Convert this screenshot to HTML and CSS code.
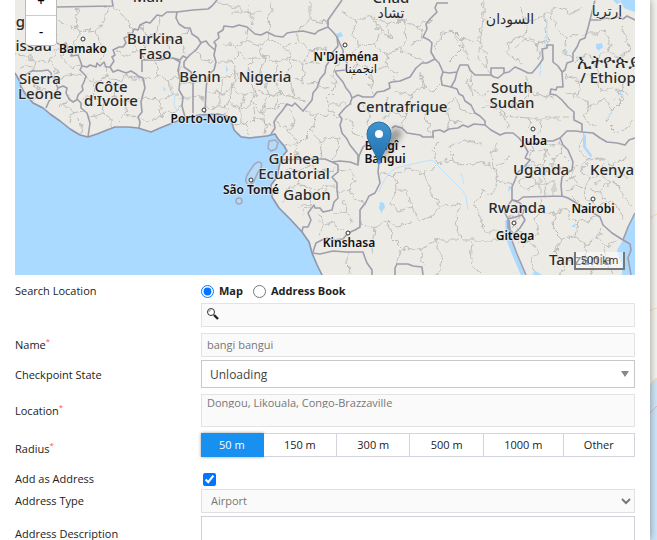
FILE: index.html
```html
<!DOCTYPE html>
<html lang="en">
<head>
<meta charset="utf-8">
<title>Checkpoint</title>
<link rel="stylesheet" href="styles.css">
</head>
<body>
<main class="panel">
  <div class="map">
    <svg class="map-canvas" viewBox="15 0 620 275" preserveAspectRatio="xMinYMin slice" role="img" aria-label="Map of Central Africa">
      <defs>
        <filter id="rough" x="0" y="0" width="1" height="1">
          <feTurbulence type="fractalNoise" baseFrequency="0.14" numOctaves="2" seed="7" result="n"/>
          <feDisplacementMap in="SourceGraphic" in2="n" scale="9" xChannelSelector="R" yChannelSelector="G"/>
        </filter>
        <linearGradient id="pin" x1="0" y1="0" x2="0" y2="1">
          <stop offset="0" stop-color="#3f94cf"/><stop offset="1" stop-color="#226fae"/>
        </linearGradient>
        <filter id="soft" x="-50%" y="-50%" width="200%" height="200%"><feGaussianBlur stdDeviation="3"/></filter>
        <clipPath id="land"><path d="M15 0H635V275H323L318 265 313 253 310 242 303 232 292 220 280 208 273 197 272 185 278 177 280 167 282 158 287 150 285 145 278 138 275 133 267 135 250 137 242 136 235 130 233 123 227 115 217 113 200 114 187 117 175 122 160 128 151 132 138 128 128 127 115 127 107 130 97 134 88 137 80 134 70 128 60 120 50 113 43 107 33 102 27 95 22 87 21 80 15 73z"/></clipPath>
      </defs>
      <rect class="land" x="15" y="0" width="620" height="275"/>
      <g class="region" filter="url(#rough)" clip-path="url(#land)">
        <path d="M15 0H635V275H15z" fill="none" stroke="none"/>
        <path d="M79 8L76 25 80 34 74 42 80 55M107 7L106 18 97 30 99 42 104 50 101 62M74 28L88 31 98 30M112 6L128 20 132 32M57 20L72 28M15 55L28 56 36 62 50 60 58 48M50 60L57 73 52 77M36 62L33 72M66 44L61 58 70 68 82 66M57 80L70 74 82 76M20 66L33 68"/>
        <path d="M30 78L37 88 34 100M37 88L48 92 56 92M60 108L68 98M63 104L72 112 70 124M72 112L84 110M86 76L96 82 108 76 118 82 130 76 142 80M96 82L94 96 82 98M94 96L104 102 114 96 124 102 141 98M104 102L103 114 90 116M103 114L112 118 112 128M114 96L116 84M124 102L126 114 138 118M126 114L118 122M108 76L105 67M76 118L82 124 80 132"/>
        <path d="M117 50L126 56 138 52 146 60M128 33L136 44 138 52M140 25L148 36 158 32 165 40 178 38 187 30M148 36L146 50M165 40L168 52 160 60M178 38L182 50 190 54M158 32L160 18M143 79L158 76 170 80 179 78M158 76L156 62M170 80L172 94 160 100 143 98M160 100L162 114 152 122 140 118M162 114L174 110 183 106M172 94L181 94M184 67L178 72M180 84L193 82M182 98L193 98M193 82L206 82M193 96L205 98M196 50L204 60 215 62"/>
        <path d="M217 0L248 12 252 26M248 5L252 18M272 0L268 20 270 32M310 0V20L296 32M310 20L328 22M230 12L262 12"/>
        <path d="M223 44L236 46 246 40 258 46 270 40 284 46 298 42 310 50 328 48M217 62L232 62 240 54 250 60 264 56 276 62 290 58 304 64 320 62M236 46L240 54M258 46L264 56M284 46L290 58M298 42L296 34M310 50L304 64M246 40L248 28M270 40L268 32M212 74L224 78 236 74 248 80 262 74 274 80 288 76 302 82 318 84M232 62L236 74M250 60L248 80M264 56L262 74M276 62L274 80M290 58L288 76M304 64L302 82M208 92L220 94 232 88 244 96 256 90 268 96 280 92 294 98 306 100M224 78L220 94M236 74L232 88M248 80L256 90M262 74L268 96M274 80L280 92M288 76L294 98M206 106L220 108 230 102 240 110 252 104 262 112 274 108 288 104M220 94L220 108M232 88L230 102M244 96L240 110M256 90L252 104M268 96L262 112M280 92L274 108M240 110L240 122 234 124M252 104L254 118 246 126 248 136M254 118L266 122 264 134M262 112L266 122 273 124M230 102L224 114M240 122L246 126"/>
        <path d="M342 12L356 20 372 16 388 24 402 20 418 26 432 20M356 20L352 34 360 44 352 54 358 64 348 72M372 16L380 32 374 46 388 54 400 48 412 56 422 63M374 46L360 44M388 24L392 38 380 32M402 20L406 36 400 48M418 26L423 37 412 44M358 64L372 70 386 66 396 74 392 82M372 70L370 84 376 96M386 66L388 54M358 64L352 80"/>
        <path d="M340 60L332 74 336 88 326 98 330 112 340 118M318 88L330 90M302 110L316 116 328 114M316 116L312 130 320 142 332 138 340 140M287 108L296 120 290 132 298 144 312 130M298 144L296 156M320 142L322 158M275 122L286 126 290 132M283 148L298 144M340 140L338 152 332 160M330 104L352 104"/>
        <path d="M360 104L370 112 366 124 376 132 372 142M386 96L390 110 384 120M390 110L404 116 412 108 426 112 434 104 446 106 456 98M404 116L402 128M426 112L428 128 434 136M446 106L450 120 446 130M412 108L410 94 424 88 434 92 442 84M424 88L420 72M394 92L410 94M456 98L464 112 474 114M450 120L462 122M345 118L354 122 352 132 362 138"/>
        <path d="M482 0L484 20 478 40 486 54 488 70M440 34L452 30 460 38 474 40M440 34L436 50M452 30L462 48 470 60M462 48L450 60M508 42L524 36 536 44 548 40M508 42L510 56 522 64M524 36L528 22 544 16 546 30 548 44M544 16L556 8 570 14 584 8M556 30L566 38 578 34M556 30L552 12M566 38L564 52 574 58M528 22L520 8M536 44L540 58"/>
        <path d="M470 70L472 88 482 96 492 90M482 108L492 106 504 116 530 118 562 118M526 76L530 92 520 104 504 106M530 92L544 96 556 100M530 118L528 132M541 118L540 132 530 140M492 106L484 100M504 116L508 128M466 78L474 96M514 96L516 112"/>
        <path d="M574 62L582 54 594 60 608 52 620 58 630 50M594 60L598 74M565 76L580 80 590 74 602 92 616 88 628 96M580 80L578 96 590 104 584 118 596 128M590 104L604 100 612 110 606 122 618 134M612 110L622 100 616 88M566 94L578 96M622 26L626 40 630 50M604 32L610 44 608 52M584 34L596 34 604 32M618 134L632 124 635 120M624 80L618 96"/>
        <path d="M286 168L300 170 308 164 320 172 334 170M300 170L298 184 286 190M298 184L312 190 326 186 336 186M312 190L310 204 298 208M310 204L304 214M286 190L282 204M326 186L330 200M350 168L356 180 348 190 356 200 366 202M340 172L350 168M348 190L338 192M334 214L346 212 352 222M346 212L344 200M318 212L324 226 334 222 342 232M324 226L318 238"/>
        <path d="M380 172L394 176 408 168 424 174 438 164 452 160 462 166 480 162 494 168 498 180 512 184M438 164L432 150 440 142M394 176L398 190 390 202 398 212 412 208 418 220 432 216 440 206 460 204M412 208L406 190 398 190M460 204L456 220 460 240 482 240 508 240M498 180L492 196 484 190 474 204 480 216 484 232 508 232M452 160L450 146 464 140 480 144M424 174L430 188 440 206M360 222L374 228 388 220 398 226 412 222M388 220L392 238 402 248 396 264M374 228L372 252M346 253L350 275M402 248L420 250 436 240 456 240M472 242L470 260 480 274M436 240L442 256 438 275M420 250L424 264M508 158L498 166M498 144L490 156 494 168"/>
        <path d="M530 142L534 152 528 160 538 166 530 174 536 184 526 190M534 152L546 150 552 158 562 154 568 160M546 150L544 164 538 166M552 158L554 170 544 174 544 164M554 170L564 168M544 174L546 196M536 184L546 184 554 180 554 196M526 190L518 184M562 154L558 142M556 146L546 144M520 168L530 174M518 184L524 176M526 150L534 152M548 164L556 164M540 176L540 194"/>
        <path d="M584 136L580 150 588 160 580 170 590 178 584 190 576 186 564 190M588 160L602 158 612 164 626 158M590 178L602 174 608 182 600 192 606 202 598 208M608 182L620 186 624 198 632 204M584 190L586 200 594 204M600 192L590 190M602 174L604 164M576 166L570 178 578 182M606 202L618 206 624 220M612 164L616 176 628 178M572 196L580 204M594 184L602 182M566 180L576 178"/>
        <path d="M540 200L542 212 534 220 540 232 530 240 538 250 530 262 534 275M542 212L556 214 566 208 570 218 582 222 594 218M556 214L552 228 562 238 556 250 566 260 562 275M562 238L576 236 586 244 598 238 608 246 616 240M576 236L578 222M586 244L584 258 594 266 590 275M566 260L584 258M598 238L602 228M530 240L520 246M604 246L606 262 612 275M512 204L518 214 526 208M518 214L514 226 522 232M508 218L518 214"/>
      </g>
      <g class="dash">
        <path d="M484 2L482 30 478 58 490 73M515 48L526 38 538 41 549 46M468 55L462 42 450 30 440 36M545 117H573"/>
      </g>
      <g class="water">
        <path d="M15 73L21 80 22 87 27 95 33 102 43 107 50 113 60 120 70 128 80 134 88 137 97 134 107 130 115 127 128 127 138 128 151 132 160 128 175 122 187 117 200 114 217 113 227 115 233 123 235 130 242 136 250 137 267 135 275 133 278 138 285 145 287 150 282 158 280 167 278 177 272 185 273 197 280 208 292 220 303 232 310 242 313 253 318 265 323 275H15z"/>
        <path d="M635 213L628 227 623 240 617 250 619 258 622 264 622 275H635z"/>
        <path d="M613 0L617 4 621 2 624 8 629 10 635 12V0z"/>
        <path d="M596 44L602 43 603 48 600 49 599 51 596 48zM565 49L568 52 566 54zM336 34L341 32 343 36 338 38zM331 81L335 84 332 84zM380 202L384 203 385 208 382 211 382 214 379 208zM583 132L586 136 586 147 592 155 591 158 583 147zM509 186L512 187 508 192zM620 92L623 95 620 95zM163 86L166 90 164 91zM226 65L228 70 226 72zM571 227L576 223 575 227zM533 164L527 168 524 166zM534 270L542 275H534zM603 117L601 119zM56 33L58 35 56 36z"/>
        <path class="lake" d="M507 220L508 238 514 254 523 275"/>
        <path class="stream" d="M379 192Q384 176 396 168Q420 162 432 160L440 168 450 178 462 190 466 196M461 173L464 184M466 196L468 210M547 18V34L545 46L541 60L540 76M171 89L175 95 174 104 177 111M612 112L606 120M616 98L613 101M578 56L576 62"/>
      </g>
      <g class="border">
        <path d="M28 0L29 3 57 7 113 6 112 0M57 43L61 45 66 43 68 50 72 53 71 56 78 55 80 60 82 66 87 67 90 65 96 67 97 63 100 66 104 62 106 67 110 67 113 72 118 70 126 73 131 71 136 74 138 76 143 78 145 88 143 94 141 102 142 112 138 117 140 122 139 128"/>
        <path d="M82 66L80 70 86 76 84 82 82 86 83 90 78 95 77 99 81 103 81 108 87 113 90 123 88 137M25 75L32 71 41 71 48 70 51 73 52 77 57 80 56 84 58 88 63 86 67 88 66 93 69 99 73 102 78 99M46 108L49 101 55 96 58 88"/>
        <path d="M110 67L114 61 112 57 115 55 113 50 119 47 123 47 126 43 124 38 129 36 128 33 132 34 134 29 138 30 140 25 146 22 150 23 157 15 162 16 167 12 177 12 176 18 179 24 185 28 190 28 192 34 198 38 201 43 196 50 191 54 187 58 183 56 180 60 173 58 158 60 142 60V72M177 12L193 10 208 9 212 6 217 0"/>
        <path d="M173 58L180 62 178 70 180 80 179 90 183 97 182 106 185 117M187 58L184 62 184 67 191 72 193 80V113M200 43L206 41 209 45 215 50 214 55 216 62 214 70 209 74 207 80 206 90 205 113"/>
        <path d="M215 50L216 45 214 42 219 38 218 33 223 30 224 26 233 27 239 25 247 27 255 34 261 35 267 32 275 36 283 37 287 33 293 32 303 31 315 34 318 31 328 27 328 20 335 10 342 0M328 27L333 32 337 37 340 44 343 50 343 56 347 63 346 70 335 71 337 75 343 82 346 88 350 93 352 98"/>
        <path d="M337 37L338 46 332 53 330 60 326 66 325 73 320 79 317 88 313 93 312 100 308 105 303 111 299 107 295 103 292 106 287 104 282 111 277 117 274 122 275 128 271 134"/>
        <path d="M352 98L358 95 363 97 373 97 377 92 384 91 390 88 389 83 392 82 400 81 410 77 416 68 422 63 427 63 435 59 439 63 443 72 441 78 442 85 451 87 455 80 457 72M443 72L449 73 457 72 460 65 468 65 470 70 475 75 485 75 491 75 491 68 504 68 504 73 498 78 494 77 491 75M504 73L509 72 515 67 520 69 528 73 532 73 538 66 543 59 542 49 547 48 547 45 553 45 553 62 558 66 562 72 563 87 557 87 556 90 551 89 550 94 556 95 562 100 568 107 574 112 574 120 578 122 582 124 582 132"/>
        <path d="M448 3L437 3 435 8 437 12 430 19 426 24 427 29 423 37 429 40 432 43 431 52 435 59M451 87L457 89 459 94 463 96 465 101 471 105 475 113 480 116 485 121 485 125M392 128L395 126 402 128 407 133 420 135 423 137 433 137 433 131 440 130 444 132 449 129 458 128 463 125 468 127 474 124 485 125 491 130 500 135 505 133 513 133 519 138 523 143 528 152 525 158"/>
        <path d="M352 98L350 104 345 108 339 115 342 119 340 125 342 133 347 139 350 145 358 155 358 165M282 160L303 159 325 159 332 162 340 161 350 162 358 165 359 156 363 147 368 143 374 143M332 162L338 165 338 172 332 177 337 183 337 190 338 198 334 202 332 210 323 212 320 208 315 208 314 205 308 213 311 220 308 227 303 227 302 232"/>
        <path d="M379 163L378 172 380 183 375 193 369 196 366 202 360 210V227L355 230 348 233 343 239 333 240 327 238 322 240 316 243 313 252M312 253L320 254 333 251 346 252 363 252 365 258 367 263 372 270 372 275M395 275V268L397 264 408 264 413 266 422 267 423 275"/>
        <path d="M527 142L533 144 543 141 553 141 560 138 567 131 576 131 582 132 593 133 600 138 607 142 617 143 625 145 629 140 635 138M560 138L563 145 568 150 571 157 573 162 572 170 567 173 562 177 561 185 562 196 568 198 583 207 600 217 603 225 612 233 623 240 628 227 635 213M623 240L630 244 631 250 628 258 631 275M525 158L530 160 525 166 518 172 515 180 512 187 512 200M512 200L518 201 523 197 562 196"/>
        <path d="M512 200L507 207 505 213 508 219 516 217 522 215 525 208 520 203zM508 219L508 228 514 234 520 228 525 220 522 215M595 0L593 8 590 20 588 28 585 38 580 40 577 47 573 53 573 61 567 63 565 70 562 72M590 20L600 20 606 18 611 19 617 17 623 19 627 16 635 20"/>
        <path d="M509 220L511 238 517 254 526 275"/>
      </g>
      <g class="coast">
        <path d="M15 73L19 80 21 87 26 95 33 103 43 108 50 114 60 121 70 129 80 135 88 137 97 134 107 130 115 127 128 127 138 128 151 132 160 128 175 122 187 117 200 115 217 114 227 116 232 123 234 130 241 137 250 138 267 136 275 134 278 139 284 146 287 151 281 158 279 167 277 177 271 185 272 197 279 208 291 220 302 232 309 242 312 253 317 265 322 275"/>
        <path class="isle" d="M269 141L275 140 278 143 276 149 271 151 268 148zM253 166Q258 160 261 163Q263 166 258 172L254 181Q249 188 246 182Q245 178 249 172z"/>
        <circle class="isle" cx="239" cy="201" r="3"/>
      </g>
      <g class="town">
        <circle cx="83" cy="39" r="2"/><circle cx="204" cy="110" r="2"/><circle cx="345" cy="45" r="2"/><circle cx="251" cy="180" r="2"/><circle cx="348" cy="233" r="2"/><circle cx="533" cy="129" r="2"/><circle cx="593" cy="199" r="2"/><circle cx="514" cy="223" r="2"/>
      </g>
      <g class="country">
        <text x="148" y="2">Mali</text><text x="391" y="3">Chad</text><text x="391" y="18" class="arabic">تشاد</text>
        <text x="25" y="27" class="end">ég</text><text x="52" y="51" class="end">issau</text>
        <text x="155" y="44">Burkina</text><text x="155" y="59">Faso</text>
        <text x="40" y="84">Sierra</text><text x="40" y="99">Leone</text>
        <text x="111" y="92">Côte</text><text x="111" y="106">d'Ivoire</text>
        <text x="200" y="82">Bénin</text><text x="265" y="82">Nigeria</text>
        <text x="294" y="164">Guinea</text><text x="294" y="179">Ecuatorial</text><text x="307" y="200">Gabon</text>
        <text x="402" y="112">Centrafrique</text><text x="512" y="93">South</text><text x="512" y="108">Sudan</text>
        <text x="510" y="24" class="arabic">السودان</text><text x="607" y="16" class="arabic">إرتريا</text><text x="607" y="0">ኤርትራ</text>
        <text x="577" y="68" class="start ethiopic">ኢትዮጵያ</text><text x="580" y="83" class="start">/ Ethiopia</text>
        <text x="541" y="175">Uganda</text><text x="612" y="175">Kenya</text><text x="517" y="213">Rwanda</text><text x="549" y="265" class="start">Tanzania</text>
      </g>
      <g class="city">
        <text x="83" y="53">Bamako</text><text x="204" y="123">Porto-Novo</text><text x="346" y="61">N'Djaména</text><text x="361" y="73" class="arabic">انجمينا</text>
        <text x="385" y="150">Bangî -</text><text x="385" y="163">Bangui</text><text x="534" y="145">Juba</text><text x="593" y="213">Nairobi</text>
        <text x="515" y="240">Gitega</text><text x="349" y="247">Kinshasa</text><text x="251" y="194">São Tomé</text>
      </g>
      <path d="M381 161L402 135Q402 126 393 129L380 143z" fill="#000" opacity=".35" filter="url(#soft)"/>
      <path d="M379 162L369 142Q367 138 367 134A12 12 0 0 1 391 134Q391 138 389 142z" fill="url(#pin)" stroke="#2b6f9f" stroke-width="1"/>
      <circle cx="379" cy="134" r="4" fill="#fff"/><circle cx="379" cy="162" r="2" fill="#3388ff"/>
    </svg>
    <div class="zoom"><button type="button" aria-label="Zoom in">+</button><button type="button" aria-label="Zoom out">-</button></div>
    <div class="scale">500 km</div>
  </div>

  <form class="form">
    <span class="label first">Search Location</span>
    <div class="choices">
      <input type="radio" id="by-map" name="by" checked><label for="by-map">Map</label>
      <input type="radio" id="by-book" name="by"><label for="by-book">Address Book</label>
    </div>
    <div class="field search">
      <svg width="12" height="12" viewBox="0 0 12 12" aria-hidden="true"><circle cx="4" cy="4" r="3.5" fill="#fff" stroke="#333"/><path d="M2 4Q2 2 4 2" fill="none" stroke="#999"/><path d="M7 7L11 11" stroke="#222" stroke-width="2.4"/></svg>
      <input type="text" aria-label="Search location">
    </div>
    <label class="label" for="name">Name<sup>*</sup></label>
    <input class="field name" id="name" type="text" value="bangi bangui">
    <label class="label" for="state">Checkpoint State</label>
    <div class="pick state"><select id="state"><option>Unloading</option></select><svg width="8" height="6" viewBox="0 0 8 6" aria-hidden="true"><path d="M0 0H8L4 6z" fill="#888"/></svg></div>
    <label class="label" for="location">Location<sup>*</sup></label>
    <div class="field location"><textarea id="location" rows="1">Dongou, Likouala, Congo-Brazzaville</textarea></div>
    <span class="label low" id="radius">Radius<sup>*</sup></span>
    <div class="radius" role="group" aria-labelledby="radius">
      <button type="button" class="on">50 m</button><button type="button">150 m</button><button type="button">300 m</button><button type="button">500 m</button><button type="button">1000 m</button><button type="button">Other</button>
    </div>
    <label class="label" for="add">Add as Address</label>
    <input class="tick" id="add" type="checkbox" checked>
    <label class="label" for="type">Address Type</label>
    <div class="pick type"><select id="type"><option>Airport</option></select><svg width="10" height="7" viewBox="0 0 10 7" aria-hidden="true"><path d="M1 1L5 5 9 1" fill="none" stroke="#777" stroke-width="2"/></svg></div>
    <label class="label" for="desc">Address Description</label>
    <textarea class="desc" id="desc"></textarea>
  </form>
</main>
<aside class="backdrop" aria-hidden="true">
  <svg viewBox="0 0 7 540" preserveAspectRatio="xMinYMin slice">
    <rect width="7" height="540" fill="#f4f3f0"/>
    <path d="M0 387L3 380 7 378V540H0z" fill="#cfe6f8"/>
    <path d="M0 218L7 214M0 311L3 309 7 308M0 386L3 381 7 378" fill="none" stroke="#f6deb0" stroke-width="1"/>
    <path d="M0 413L7 406" stroke="#cbbfd0"/>
  </svg>
</aside>
</body>
</html>
```
FILE: styles.css
```css
* { box-sizing: border-box; }

body {
  margin: 0;
  height: 100vh;
  overflow: hidden;
  display: flex;
  background: #f4f3f0;
  font: 11px/16px "Open Sans", "Noto Sans", sans-serif;
  color: #222;
}

input, select, textarea, button { font: inherit; color: inherit; margin: 0; }

.panel {
  position: relative;
  flex: 1;
  min-width: 0;
  padding: 0 15px;
  background: #fff;
  box-shadow: 0 0 8px rgba(0, 0, 0, .4);
  z-index: 1;
}
.backdrop { flex: 0 0 7px; overflow: hidden; }
.backdrop svg { display: block; width: 7px; height: 540px; }

/* Map */
.map { position: relative; overflow: hidden; background: #ecebe6; }
.map-canvas { display: block; width: 100%; height: 275px; }
.land { fill: #ecebe6; }
.water { fill: #aadaff; }
.water .lake { fill: none; stroke: #aadaff; stroke-width: 4; }
.water .stream { fill: none; stroke: #bfe2fb; stroke-width: 1; }
.region { fill: none; stroke: #bdbcba; stroke-width: 1; }
.dash { fill: none; stroke: #c4c3c1; stroke-dasharray: 6 3; }
.border { fill: none; stroke: #9f9eac; stroke-width: 1.6; stroke-linejoin: round; }
.coast { fill: none; stroke: #9695a8; stroke-width: 1.6; stroke-linejoin: round; }
.coast .isle { fill: #b4dcf9; stroke: #a6a9bd; }
.town { fill: #fff; stroke: #333; stroke-width: 1; }
.country, .city {
  font-family: "Noto Sans", "Open Sans", "DejaVu Sans", sans-serif;
  text-anchor: middle;
  paint-order: stroke;
  stroke: rgba(240, 239, 235, .6);
  stroke-width: 2px;
}
.country { font-size: 15px; font-weight: 500; fill: #2b2b2b; }
.city { font-size: 12px; font-weight: 600; fill: #111; }
.country .end { text-anchor: end; }
.country .start { text-anchor: start; }
.country .arabic { font-size: 14px; }
.country .ethiopic { font-size: 18px; }
.city .arabic { font-weight: 400; }

.zoom {
  position: absolute;
  top: -16px;
  left: 10px;
  width: 32px;
  border: 1px solid #bbb;
  border-radius: 4px;
  overflow: hidden;
}
.zoom button {
  display: block;
  width: 100%;
  height: 30px;
  padding: 0;
  border: 0;
  background: #fff;
  color: #000;
  font-size: 13px;
  font-weight: 600;
}
.zoom button + button { border-top: 1px solid #ccc; }
.scale {
  position: absolute;
  right: 10px;
  bottom: 5px;
  width: 51px;
  height: 18px;
  border: 2px solid #777;
  border-top: 0;
  background: rgba(255, 255, 255, .5);
  text-align: center;
  color: #333;
}

/* Form */
.form { display: grid; grid-template-columns: 186px 1fr; align-items: center; }
.label sup { color: #f55; font-size: 8px; line-height: 0; vertical-align: 5px; }
.first { padding-top: 4px; }
.low { padding-top: 8px; }

.choices { display: flex; align-items: center; height: 28px; padding-top: 4px; font-weight: 700; }
.choices input { width: 13px; height: 13px; }
.choices label { margin: 0 10px 0 5px; }

.field {
  width: 100%;
  height: 24px;
  padding: 0 5px;
  border: 1px solid #e3e3e3;
  border-radius: 0;
  background: #fafafa;
  color: #777;
  outline: 0;
}
.search { grid-column: 2; display: flex; align-items: center; }
.search svg { flex: none; margin-bottom: 2px; }
.search input { flex: 1; min-width: 0; border: 0; background: none; outline: 0; }
.name { margin-top: 6px; padding-bottom: 2px; }
.form label[for="name"] { padding-top: 5px; }

.pick { position: relative; display: flex; align-items: center; }
.pick select {
  appearance: none;
  width: 100%;
  height: 100%;
  padding: 0 24px 0 8px;
  border: 1px solid #c8c8c8;
  border-radius: 0;
  background: #fff;
}
.pick svg { position: absolute; right: 6px; pointer-events: none; }
.form label[for="state"] { padding-top: 4px; }
.state { height: 28px; margin-top: 3px; font-size: 12px; color: #444; }
.state select { padding-top: 2px; }
.type { height: 24px; color: #777; }
.type select { background: #fafafa; border-color: #e0e0e4; padding-left: 9px; }
.type svg { right: 4px; }

.location { height: 33px; margin: 6px 0; }
.location textarea {
  display: block;
  width: 100%;
  height: 13px;
  padding: 0;
  border: 0;
  background: none;
  line-height: 16px;
  resize: none;
  overflow: hidden;
}

.radius { display: flex; height: 24px; }
.radius button {
  flex: 1 1 auto;
  padding: 0 18px;
  border: 1px solid #d4d4dc;
  border-left-width: 0;
  background: #fff;
  white-space: nowrap;
}
.radius .on { flex: none; background: #1890f0; border-color: #1890f0; color: #fff; box-shadow: 0 0 3px rgba(0, 0, 0, .4); }

.tick { width: 13px; height: 13px; margin: 16px 2px 3px; }
.form label[for="add"] { padding-top: 12px; }
.desc {
  width: 100%;
  height: 34px;
  margin-top: 3px;
  border: 1px solid #d0d0d8;
  border-radius: 0;
  background: #fff;
  resize: none;
}
.form label[for="desc"] { padding-top: 4px; }
```
